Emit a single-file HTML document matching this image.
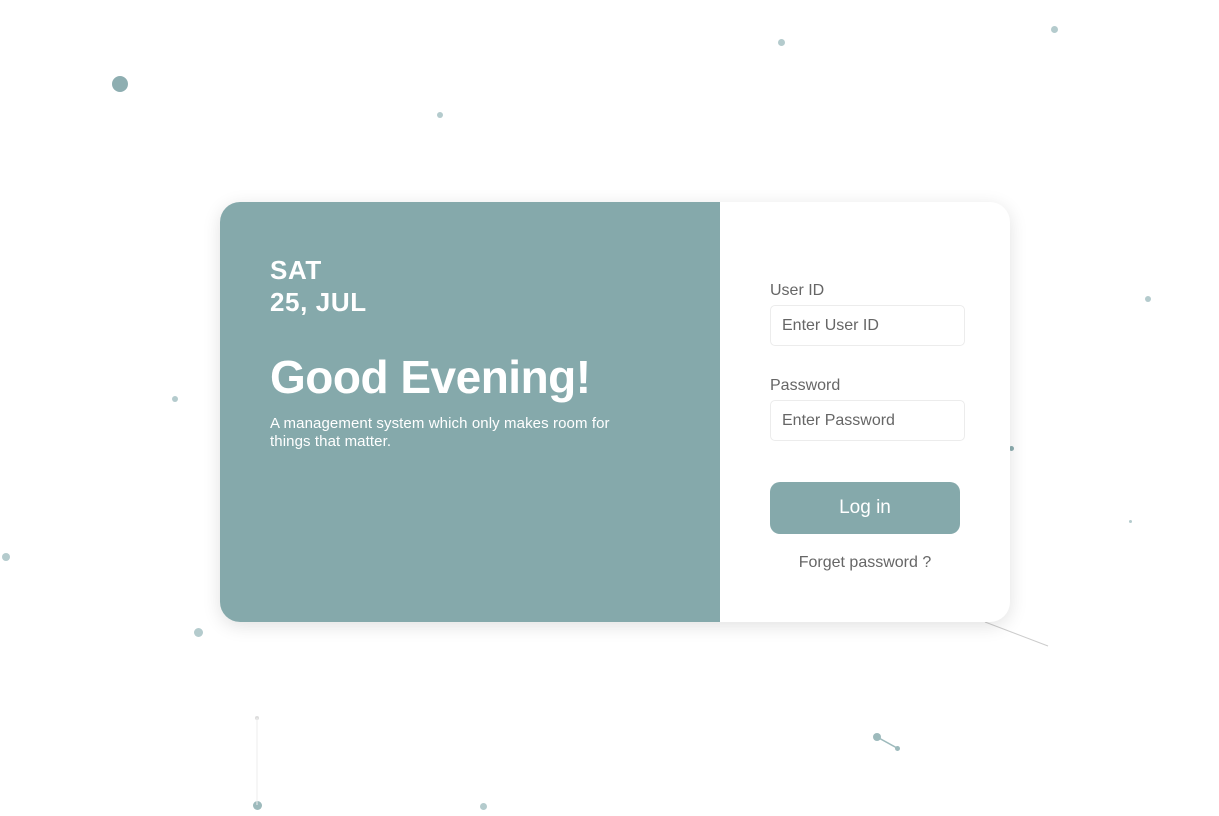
<!DOCTYPE html>
<html><head><meta charset="utf-8"><style>
html,body{margin:0;padding:0;width:1219px;height:816px;background:#fff;overflow:hidden;font-family:"Liberation Sans",sans-serif;position:relative}
.card{position:absolute;left:220px;top:202px;width:790px;height:420px;border-radius:20px;background:#fff;box-shadow:0 4px 18px rgba(0,0,0,0.12);overflow:hidden}
.left{position:absolute;left:0;top:0;width:500px;height:420px;background:#85a9ab;color:#fff}
.date{position:absolute;left:50px;top:52px;font-size:26px;font-weight:bold;line-height:32px;letter-spacing:0.6px}
.greet{position:absolute;left:50px;top:148px;font-size:46px;font-weight:bold;letter-spacing:-0.5px}
.sub{position:absolute;left:50px;top:213px;font-size:15px;line-height:18px;width:372px;letter-spacing:0.1px}
.lbl{position:absolute;left:550px;font-size:16px;color:#666}
.inp{position:absolute;left:550px;width:195px;height:41px;border:1.5px solid #ececec;border-radius:5px;box-sizing:border-box;font-size:16px;color:#666;padding-left:11px;line-height:39px}
.btn{position:absolute;left:550px;top:280px;width:190px;height:52px;border-radius:10px;background:#85a9ab;color:#fff;font-size:19px;text-align:center;line-height:52px}
.fg{position:absolute;left:550px;top:352px;width:190px;text-align:center;font-size:16px;color:#666}
.d{position:absolute;border-radius:50%;background:#b4cbcd}
</style></head><body>
<div class="d" style="left:112px;top:76px;width:16px;height:16px;background:#8eaeb1"></div>
<div class="d" style="left:437px;top:112px;width:6px;height:6px"></div>
<div class="d" style="left:778px;top:39px;width:7px;height:7px"></div>
<div class="d" style="left:1051px;top:26px;width:7px;height:7px"></div>
<div class="d" style="left:1145px;top:296px;width:6px;height:6px"></div>
<div class="d" style="left:172px;top:396px;width:6px;height:6px"></div>
<div class="d" style="left:2px;top:553px;width:8px;height:8px"></div>
<div class="d" style="left:194px;top:628px;width:9px;height:9px"></div>
<div class="d" style="left:1009px;top:446px;width:5px;height:5px;background:#8eaeb1"></div>
<div class="d" style="left:1129px;top:520px;width:3px;height:3px"></div>
<div class="d" style="left:253px;top:801px;width:9px;height:9px;background:#9dbabc"></div>
<div class="d" style="left:255px;top:716px;width:4px;height:4px;background:#ddd"></div>
<div class="d" style="left:480px;top:803px;width:7px;height:7px"></div>
<div class="d" style="left:873px;top:733px;width:8px;height:8px;background:#9dbabc"></div>
<div class="d" style="left:895px;top:746px;width:5px;height:5px;background:#9dbabc"></div>
<svg style="position:absolute;left:0;top:0" width="1219" height="816">
<line x1="257" y1="718" x2="257" y2="805" stroke="#eee" stroke-width="1"/>
<line x1="877" y1="737" x2="897" y2="748" stroke="#9dbabc" stroke-width="1.5"/>
<line x1="985" y1="622" x2="1048" y2="646" stroke="#ccc" stroke-width="1"/>
</svg>
<div class="card">
<div class="left">
<div class="date">SAT<br>25, JUL</div>
<div class="greet">Good Evening!</div>
<div class="sub">A management system which only makes room for things that matter.</div>
</div>
<div class="lbl" style="top:80px">User ID</div>
<div class="inp" style="top:103px">Enter User ID</div>
<div class="lbl" style="top:175px">Password</div>
<div class="inp" style="top:198px">Enter Password</div>
<div class="btn">Log in</div>
<div class="fg">Forget password ?</div>
</div>
</body></html>
